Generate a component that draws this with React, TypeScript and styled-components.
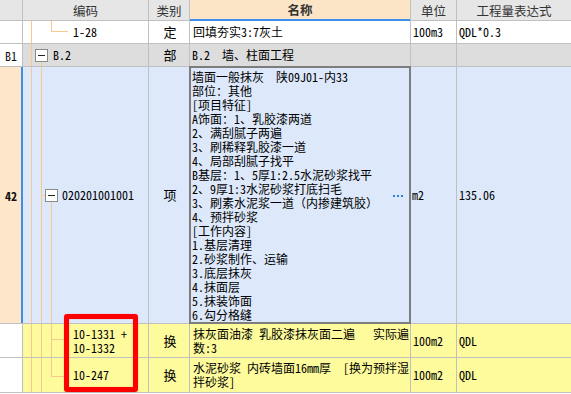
import React from "react";
import styled, { createGlobalStyle } from "styled-components";

const cellFont = `"Noto Sans Mono CJK SC", "Noto Sans CJK SC", "Liberation Mono", monospace`;
const headFont = `"Noto Sans CJK SC", "Noto Sans", sans-serif`;

const Global = createGlobalStyle`
  html, body { margin: 0; padding: 0; background: #ffffff; }
  body { font-family: ${cellFont}; }
`;

type Tone = "white" | "gray" | "blue" | "yellow" | "peach";
const toneBg: Record<Tone, string> = {
  white: "#ffffff",
  gray: "#dddddd",
  blue: "#dde9fb",
  yellow: "#fefb9d",
  peach: "#fde6c9",
};

const Sheet = styled.div`
  position: relative;
  width: 571px;
  height: 394px;
  overflow: hidden;
  background: #ffffff;
`;

const Grid = styled.div`
  display: grid;
  grid-template-columns: 22px 125px 40px 220px 45px 114px;
  grid-template-rows: 20px 22px 22px 256px 33px 34px;
  gap: 1px;
  background: #c0c0c0;
  border-bottom: 1px solid #c0c0c0;
`;

const HeadCell = styled.div<{ $accent?: boolean }>`
  box-sizing: border-box;
  display: flex;
  align-items: center;
  justify-content: center;
  background: ${(p) => (p.$accent ? "#fce5c6" : "#e6e6e6")};
  font-family: ${headFont};
  font-size: 12.5px;
  font-weight: ${(p) => (p.$accent ? 700 : 400)};
  color: #333333;
  ${(p) => (p.$accent ? "margin-bottom: -1px; border-bottom: 2px solid #3f8fe8;" : "")}
`;

const RowHead = styled.div<{ $tone: Tone; $selected?: boolean }>`
  box-sizing: border-box;
  display: flex;
  align-items: center;
  justify-content: center;
  background: ${(p) => toneBg[p.$tone]};
  font-family: ${cellFont};
  font-size: 12px;
  font-weight: ${(p) => (p.$selected ? 700 : 400)};
  color: #111111;
  ${(p) => (p.$selected ? "margin-right: -1px; border-right: 2px solid #3c8ee8; padding-left: 1px;" : "")}
`;

const Cell = styled.div<{ $tone: Tone; $center?: boolean; $pl?: number }>`
  box-sizing: border-box;
  position: relative;
  display: flex;
  align-items: center;
  justify-content: ${(p) => (p.$center ? "center" : "flex-start")};
  padding-left: ${(p) => (p.$pl ?? 2)}px;
  background: ${(p) => toneBg[p.$tone]};
  font-family: ${cellFont};
  font-size: 12px;
  line-height: 14px;
  color: #000000;
  white-space: pre;
`;

const TypeText = styled.span`
  font-family: "Noto Sans CJK SC", sans-serif;
  font-size: 13px;
`;

const Lines = styled.div`
  display: flex;
  flex-direction: column;
  position: relative;
`;

const EditCell = styled.div`
  box-sizing: border-box;
  margin: -1px;
  border: 2px solid #7d7d7d;
  background: #dde9fb;
  display: flex;
  align-items: flex-start;
  padding: 2px 0 0 1px;
  font-family: ${cellFont};
  font-size: 12px;
  line-height: 14px;
  color: #000000;
  white-space: pre;
`;

const EditText = styled.div`
  flex: 1;
  display: flex;
  flex-direction: column;
`;

const MoreButton = styled.svg`
  align-self: center;
  flex: none;
  margin: 0 6px 0 0;
`;

const GuideSvg = styled.svg`
  position: absolute;
  left: 0;
  top: 0;
  pointer-events: none;
`;

const Marker = styled.div`
  position: absolute;
  left: 64px;
  top: 314px;
  width: 74px;
  height: 78px;
  box-sizing: border-box;
  border: 5px solid #ff0000;
  border-radius: 3px;
  box-shadow: 0 0 1px rgba(255, 0, 0, 0.6), inset 0 0 1px rgba(255, 0, 0, 0.6);
  pointer-events: none;
`;

type Seg = [number, number, number, number];

const Guides = ({ segs, box, h }: { segs: Seg[]; box?: [number, number]; h: number }) => (
  <GuideSvg width={48} height={h} viewBox={`0 0 48 ${h}`}>
    {segs.map(([x1, y1, x2, y2], i) => (
      <line key={i} x1={x1} y1={y1} x2={x2} y2={y2} stroke="#f8c88c" strokeWidth={1} />
    ))}
    {box && (
      <g>
        <rect x={box[0] + 0.5} y={box[1] + 0.5} width={12} height={12} fill="#ffffff" stroke="#8a8a8a" />
        <line x1={box[0] + 3} x2={box[0] + 10} y1={box[1] + 6.5} y2={box[1] + 6.5} stroke="#222222" />
      </g>
    )}
  </GuideSvg>
);

const specLines = [
  "墙面一般抹灰  陕09J01-内33",
  "部位：其他",
  "[项目特征]",
  "A饰面：1、乳胶漆两道",
  "2、满刮腻子两遍",
  "3、刷稀释乳胶漆一道",
  "4、局部刮腻子找平",
  "B基层：1、5厚1:2.5水泥砂浆找平",
  "2、9厚1:3水泥砂浆打底扫毛",
  "3、刷素水泥浆一道（内掺建筑胶）",
  "4、预拌砂浆",
  "[工作内容]",
  "1.基层清理",
  "2.砂浆制作、运输",
  "3.底层抹灰",
  "4.抹面层",
  "5.抹装饰面",
  "6.勾分格缝",
];

export default function App() {
  return (
    <>
      <Global />
      <Sheet>
        <Grid>
          <HeadCell />
          <HeadCell>编码</HeadCell>
          <HeadCell>类别</HeadCell>
          <HeadCell $accent>名称</HeadCell>
          <HeadCell>单位</HeadCell>
          <HeadCell>工程量表达式</HeadCell>

          <RowHead $tone="white" />
          <Cell $tone="white" $pl={50}>
            <Guides h={22} segs={[[8.5, 0, 8.5, 22], [28.5, 0, 28.5, 10.5], [28.5, 10.5, 45, 10.5]]} />
            <Lines>1-28</Lines>
          </Cell>
          <Cell $tone="white" $center><TypeText>定</TypeText></Cell>
          <Cell $tone="white" $pl={3}>回填夯实3:7灰土</Cell>
          <Cell $tone="white">100m3</Cell>
          <Cell $tone="white" $pl={2}>QDL*0.3</Cell>

          <RowHead $tone="white">B1</RowHead>
          <Cell $tone="gray" $pl={30}>
            <Guides h={22} box={[12, 5]} segs={[[8.5, 0, 8.5, 22], [18.5, 18, 18.5, 22]]} />
            <Lines>B.2</Lines>
          </Cell>
          <Cell $tone="gray" $center><TypeText>部</TypeText></Cell>
          <Cell $tone="gray" $pl={2}>B.2  墙、柱面工程</Cell>
          <Cell $tone="gray" />
          <Cell $tone="gray" />

          <RowHead $tone="peach" $selected>42</RowHead>
          <Cell $tone="blue" $pl={39}>
            <Guides
              h={256}
              box={[22, 122]}
              segs={[[8.5, 0, 8.5, 256], [18.5, 0, 18.5, 256], [18.5, 128.5, 22, 128.5], [28.5, 135, 28.5, 256]]}
            />
            <Lines>020201001001</Lines>
          </Cell>
          <Cell $tone="blue" $center><TypeText>项</TypeText></Cell>
          <EditCell>
            <EditText>
              {specLines.map((l, i) => (
                <span key={i}>{l}</span>
              ))}
            </EditText>
            <MoreButton width={10} height={3} viewBox="0 0 10 3">
              <rect x={0} y={0} width={2} height={2} fill="#2f7fe0" />
              <rect x={4} y={0} width={2} height={2} fill="#2f7fe0" />
              <rect x={8} y={0} width={2} height={2} fill="#2f7fe0" />
            </MoreButton>
          </EditCell>
          <Cell $tone="blue" $pl={1}>m2</Cell>
          <Cell $tone="blue" $pl={2}>135.06</Cell>

          <RowHead $tone="white" />
          <Cell $tone="yellow" $pl={50}>
            <Guides h={33} segs={[[8.5, 0, 8.5, 33], [18.5, 0, 18.5, 33], [28.5, 0, 28.5, 33], [28.5, 15.5, 42, 15.5]]} />
            <Lines>
              <span>10-1331 +</span>
              <span>10-1332</span>
            </Lines>
          </Cell>
          <Cell $tone="yellow" $center><TypeText>换</TypeText></Cell>
          <Cell $tone="yellow" $pl={3}>
            <Lines>
              <span>抹灰面油漆 乳胶漆抹灰面二遍   实际遍</span>
              <span>数:3</span>
            </Lines>
          </Cell>
          <Cell $tone="yellow" $pl={2}>100m2</Cell>
          <Cell $tone="yellow" $pl={2}>QDL</Cell>

          <RowHead $tone="white" />
          <Cell $tone="yellow" $pl={50}>
            <Guides h={34} segs={[[8.5, 0, 8.5, 34], [18.5, 0, 18.5, 34], [28.5, 0, 28.5, 18.5], [28.5, 18.5, 42, 18.5]]} />
            <Lines>10-247</Lines>
          </Cell>
          <Cell $tone="yellow" $center><TypeText>换</TypeText></Cell>
          <Cell $tone="yellow" $pl={3}>
            <Lines>
              <span>水泥砂浆 内砖墙面16mm厚  [换为预拌湿</span>
              <span>拌砂浆]</span>
            </Lines>
          </Cell>
          <Cell $tone="yellow" $pl={2}>100m2</Cell>
          <Cell $tone="yellow" $pl={2}>QDL</Cell>
        </Grid>
        <Marker />
      </Sheet>
    </>
  );
}
